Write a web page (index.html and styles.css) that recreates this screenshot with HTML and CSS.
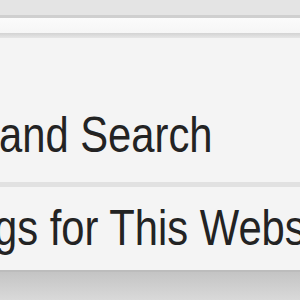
FILE: index.html
```html
<!DOCTYPE html>
<html>
<head>
<meta charset="utf-8">
<link rel="stylesheet" href="styles.css">
</head>
<body>
<div class="screen">
  <div class="chrome-top"></div>
  <div class="chrome-rule"></div>
  <div class="chrome-bar"></div>
  <div class="chrome-edge"></div>
  <div class="menu">
    <div class="item item-first">and Search</div>
    <div class="separator"></div>
    <div class="item item-second">gs for This Webs</div>
  </div>
  <div class="below"></div>
</div>
</body>
</html>
```
FILE: styles.css
```css
html, body {
  margin: 0;
  padding: 0;
  width: 300px;
  height: 300px;
  overflow: hidden;
  background: #f4f4f4;
}
.screen {
  display: flex;
  flex-direction: column;
  width: 300px;
  height: 300px;
  overflow: hidden;
}
.chrome-top {
  height: 15px;
  background: #e4e4e4;
  flex: none;
}
.chrome-rule {
  height: 3px;
  background: #cfcfcf;
  flex: none;
}
.chrome-bar {
  height: 15px;
  background: linear-gradient(#fbfbfb, #f6f6f6);
  flex: none;
}
.chrome-edge {
  height: 5px;
  background: linear-gradient(#d3d3d3, #e6e6e6);
  flex: none;
}
.menu {
  flex: none;
  height: 232px;
  background: #f4f4f4;
  display: flex;
  flex-direction: column;
  border-bottom: 2px solid #bcbcbc;
}
.item {
  font-family: "Liberation Sans", Arial, sans-serif;
  font-size: 50px;
  color: #232323;
  white-space: nowrap;
  line-height: 56px;
  margin-left: -1px;
  transform: scaleX(0.835);
  transform-origin: left center;
}
.item-first {
  margin-top: 69px;
}
.separator {
  height: 5px;
  background: #e1e1e1;
  margin-top: 19px;
}
.item-second {
  margin-top: 13px;
  margin-left: -6px;
}
.below {
  flex: 1;
  background: linear-gradient(#c4c4c4, #d9d9d9);
}
```
